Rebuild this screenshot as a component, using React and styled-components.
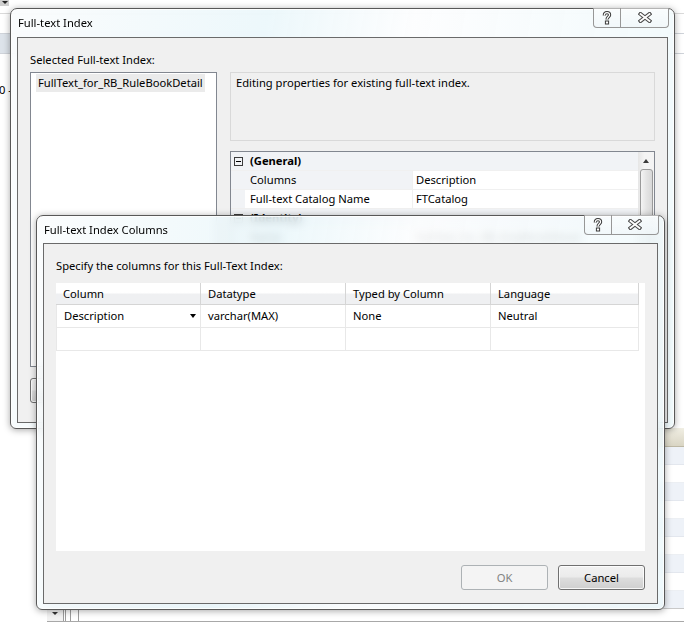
import React from 'react';
import styled, { createGlobalStyle } from 'styled-components';

const GlobalStyle = createGlobalStyle`
  html, body {
    margin: 0;
    padding: 0;
    background: #fff;
  }
  body {
    font-family: "Segoe UI", "Noto Sans", "Liberation Sans", sans-serif;
    font-size: 11.2px;
    color: #000;
  }
  * {
    box-sizing: border-box;
  }
`;

const Desktop = styled.div`
  position: relative;
  width: 684px;
  height: 622px;
  overflow: hidden;
  background: #fff;
  display: flex;
  flex-direction: column;
`;

/* the application behind the dialogs */
const TopStrip = styled.div`
  height: 14px;
  border-bottom: 1px solid #dadada;
  display: flex;
`;

const TinyDrop = styled.div`
  width: 9px;
  height: 6px;
  background: #cfcfcf;
  display: flex;
  justify-content: center;
  &::after {
    content: '';
    margin-top: 1px;
    border-left: 3px solid transparent;
    border-right: 3px solid transparent;
    border-top: 3px solid #222;
  }
`;

const Band = styled.div`
  margin-top: 19px;
  height: 21px;
  border-top: 1px solid #cfd3d9;
  border-bottom: 1px solid #cfd3d9;
  background: linear-gradient(to right, #dde3ea 0 12px, #fff 12px);
`;

const StrayText = styled.div`
  margin: 28px 0 0 -1px;
  line-height: 15px;
`;

const Filler = styled.div`
  flex: 1;
`;

const ResultsPane = styled.div`
  margin-left: 47px;
  height: 194px;
  display: flex;
  flex-direction: column;
`;

const PaneHeader = styled.div`
  height: 19px;
  background: linear-gradient(#f1efe4, #d9d5c4);
  border-bottom: 1px solid #bdb8a4;
`;

const PaneRows = styled.div`
  flex: 1;
  background: repeating-linear-gradient(#eef2f8 0 17px, #e3e7ee 17px 18px, #fff 18px 35px, #eceff3 35px 36px);
  border-bottom: 1px solid #c9c9c9;
`;

const PaneFooter = styled.div`
  height: 13px;
  display: flex;
  border-bottom: 1px solid #a8a8a8;
`;

const DropCell = styled.div`
  width: 16px;
  background: #f2f2f2;
  display: flex;
  justify-content: center;
  &::after {
    content: '';
    margin-top: 3px;
    border-left: 3px solid transparent;
    border-right: 3px solid transparent;
    border-top: 3px solid #333;
  }
`;

const PaneSep = styled.div`
  width: ${p => p.$w}px;
  border-left: 1px solid #9c9c9c;
`;

/* dialog window chrome */
const Window = styled.section`
  position: absolute;
  left: ${p => p.$left}px;
  top: ${p => p.$top}px;
  width: ${p => p.$w}px;
  height: ${p => p.$h}px;
  display: flex;
  flex-direction: column;
  border: 1px solid #585858;
  border-radius: 7px 7px 6px 6px;
  background: linear-gradient(100deg,
    rgba(250, 252, 253, 0.8) 0%,
    rgba(232, 246, 250, 0.8) 35%,
    rgba(252, 253, 254, 0.84) 55%,
    rgba(236, 248, 251, 0.8) 100%);
  backdrop-filter: blur(4px);
  box-shadow: 0 1px 7px rgba(0, 0, 0, 0.35), inset 0 0 0 1px rgba(255, 255, 255, 0.85);
`;

const TitleBar = styled.header`
  height: ${p => p.$h}px;
  flex: none;
  display: flex;
  justify-content: space-between;
  align-items: flex-start;
  padding-left: 7px;
`;

const Title = styled.span`
  margin-top: 6px;
  line-height: 15px;
`;

const CaptionGroup = styled.div`
  display: flex;
  height: 20px;
  margin-top: -1px;
  margin-right: 5px;
`;

const CaptionButton = styled.div`
  width: ${p => p.$w}px;
  display: flex;
  align-items: center;
  justify-content: center;
  border: 1px solid #979797;
  border-top: none;
  background: linear-gradient(rgba(255, 255, 255, 0.55), rgba(240, 246, 249, 0.7));
  &:first-child {
    border-bottom-left-radius: 4px;
  }
  &:last-child {
    border-left: none;
    border-bottom-right-radius: 4px;
  }
`;

const Client = styled.div`
  flex: 1;
  margin: 0 6px 5px;
  border: 1px solid #6a6a6a;
  background: #f0f0f0;
  padding: 14px 12px 0;
  display: flex;
  flex-direction: column;
`;

const Label = styled.div`
  line-height: 15px;
  margin-bottom: ${p => p.$gap}px;
`;

function HelpGlyph() {
  return (
    <svg width="10" height="14" viewBox="0 0 10 14">
      <path d="M2.3 4.6 C2.3 2.6 3.6 1.6 5 1.6 C6.6 1.6 7.6 2.6 7.6 4 C7.6 5.6 5 6 5 8.4" fill="none" stroke="#3a3a3a" strokeWidth="3.2" />
      <path d="M2.3 4.6 C2.3 2.6 3.6 1.6 5 1.6 C6.6 1.6 7.6 2.6 7.6 4 C7.6 5.6 5 6 5 8.4" fill="none" stroke="#fff" strokeWidth="1.2" />
      <rect x="3.4" y="10" width="3.2" height="3" fill="#fff" stroke="#3a3a3a" strokeWidth="1" />
    </svg>
  );
}

function CloseGlyph() {
  return (
    <svg width="14" height="11" viewBox="0 0 14 11">
      <path d="M2.5 2 L11.5 9 M11.5 2 L2.5 9" stroke="#4a4a4a" strokeWidth="4" strokeLinecap="square" />
      <path d="M2.5 2 L11.5 9 M11.5 2 L2.5 9" stroke="#fdfdfd" strokeWidth="1.8" strokeLinecap="square" />
    </svg>
  );
}

function CaptionButtons({ closeWidth }) {
  return (
    <CaptionGroup>
      <CaptionButton $w={28}><HelpGlyph /></CaptionButton>
      <CaptionButton $w={closeWidth}><CloseGlyph /></CaptionButton>
    </CaptionGroup>
  );
}

/* Full-text Index dialog parts */
const SplitRow = styled.div`
  display: flex;
  gap: 13px;
`;

const ListBox = styled.div`
  width: 187px;
  height: 295px;
  border: 1px solid #828790;
  background: #fff;
  padding: 1px 11px 0 5px;
`;

const ListItem = styled.div`
  background: #ebebeb;
  line-height: 18px;
  padding-left: 2px;
`;

const RightColumn = styled.div`
  flex: 1;
  display: flex;
  flex-direction: column;
`;

const DescBox = styled.div`
  height: 69px;
  border: 1px solid #d9d9d9;
  background: #f0f0f0;
  padding: 2px 5px;
  line-height: 15px;
`;

const PropGrid = styled.div`
  margin-top: 10px;
  height: 215px;
  border: 1px solid #828790;
  background: #fff;
  display: flex;
`;

const PropRows = styled.div`
  flex: 1;
  display: flex;
  flex-direction: column;
`;

const PropRow = styled.div`
  height: 19px;
  display: flex;
  border-bottom: 1px solid #f0f0f0;
  background: ${p => (p.$section ? '#f1f3f6' : '#fff')};
`;

const Gutter = styled.div`
  width: 14px;
  flex: none;
  background: #f1f3f6;
  display: flex;
  align-items: center;
  justify-content: center;
`;

const Expander = styled.span`
  width: 9px;
  height: 9px;
  border: 1px solid #3c3c3c;
  display: flex;
  align-items: center;
  justify-content: center;
  &::after {
    content: '';
    width: 5px;
    height: 1px;
    background: #000;
  }
`;

const SectionName = styled.div`
  padding-left: 5px;
  font-weight: 700;
  line-height: 18px;
`;

const NameCell = styled.div`
  width: 168px;
  flex: none;
  padding-left: 5px;
  line-height: 18px;
  background: ${p => (p.$shade ? '#f1f3f6' : '#fff')};
  border-right: 1px solid #f0f0f0;
`;

const ValueCell = styled.div`
  flex: 1;
  padding-left: 3px;
  line-height: 18px;
`;

const ScrollBar = styled.div`
  width: 16px;
  flex: none;
  background: linear-gradient(to right, #e6e6e6, #f4f4f4 40%, #f4f4f4);
  display: flex;
  flex-direction: column;
  align-items: center;
`;

const ScrollArrow = styled.div`
  height: 17px;
  display: flex;
  align-items: center;
  &::after {
    content: '';
    border-left: 3.5px solid transparent;
    border-right: 3.5px solid transparent;
    border-bottom: 4px solid #3a3a3a;
  }
`;

const ScrollThumb = styled.div`
  width: 13px;
  flex: 1;
  border: 1px solid #9a9a9a;
  border-radius: 3px 3px 0 0;
  background: linear-gradient(to right, #f4f4f4, #e4e4e4 50%, #d8d8d8);
`;

const ButtonRow = styled.div`
  display: flex;
  justify-content: ${p => p.$justify};
  gap: 10px;
  margin-top: ${p => p.$top}px;
`;

const Button = styled.div`
  width: 87px;
  height: 25px;
  display: flex;
  align-items: center;
  justify-content: center;
  border: 1px solid ${p => (p.$disabled ? '#adb2b5' : '#707070')};
  border-radius: 3px;
  color: ${p => (p.$disabled ? '#838383' : '#000')};
  background: ${p => (p.$disabled
    ? '#f4f4f4'
    : 'linear-gradient(#f2f2f2 0%, #ebebeb 48%, #dddddd 52%, #cfcfcf 100%)')};
  box-shadow: ${p => (p.$disabled ? 'none' : 'inset 0 0 0 1px rgba(255,255,255,0.8)')};
`;

/* Full-text Index Columns dialog parts */
const ColumnsGrid = styled.div`
  height: 268px;
  background: #fff;
`;

const GridHeader = styled.div`
  height: 22px;
  display: flex;
`;

const HeaderCell = styled.div`
  width: ${p => p.$w}px;
  padding-left: 7px;
  line-height: 21px;
  background: linear-gradient(#ffffff 0%, #ffffff 45%, #eff0f2 55%, #eff0f2 100%);
  border-right: 1px solid #d5d5d5;
  border-bottom: 1px solid #d5d5d5;
`;

const GridRow = styled.div`
  height: 23px;
  display: flex;
`;

const GridCell = styled.div`
  width: ${p => p.$w}px;
  padding: 0 7px;
  line-height: 22px;
  display: flex;
  justify-content: space-between;
  align-items: center;
  border-right: 1px solid #e8e8e8;
  border-bottom: 1px solid #e8e8e8;
  border-left: ${p => (p.$first ? '1px solid #e8e8e8' : 'none')};
`;

const ComboArrow = styled.span`
  border-left: 3.5px solid transparent;
  border-right: 3.5px solid transparent;
  border-top: 4px solid #000;
  margin-right: -3px;
`;

const columns = [
  { title: 'Column', w: 145, value: 'Description', combo: true },
  { title: 'Datatype', w: 145, value: 'varchar(MAX)' },
  { title: 'Typed by Column', w: 145, value: 'None' },
  { title: 'Language', w: 148, value: 'Neutral' },
];

export default function App() {
  return (
    <>
      <GlobalStyle />
      <Desktop>
        <TopStrip><TinyDrop /></TopStrip>
        <Band />
        <StrayText>0 -</StrayText>
        <Filler />
        <ResultsPane>
          <PaneHeader />
          <PaneRows />
          <PaneFooter>
            <DropCell />
            <PaneSep $w={2} />
            <PaneSep $w={5} />
            <PaneSep $w={8} />
            <PaneSep $w={9} />
          </PaneFooter>
        </ResultsPane>

        <Window $left={10} $top={8} $w={665} $h={421}>
          <TitleBar $h={28}>
            <Title>Full-text Index</Title>
            <CaptionButtons closeWidth={48} />
          </TitleBar>
          <Client>
            <Label $gap={5}>Selected Full-text Index:</Label>
            <SplitRow>
              <ListBox>
                <ListItem>FullText_for_RB_RuleBookDetail</ListItem>
              </ListBox>
              <RightColumn>
                <DescBox>Editing properties for existing full-text index.</DescBox>
                <PropGrid>
                  <PropRows>
                    <PropRow $section>
                      <Gutter><Expander /></Gutter>
                      <SectionName>(General)</SectionName>
                    </PropRow>
                    <PropRow>
                      <Gutter />
                      <NameCell $shade>Columns</NameCell>
                      <ValueCell>Description</ValueCell>
                    </PropRow>
                    <PropRow>
                      <Gutter />
                      <NameCell>Full-text Catalog Name</NameCell>
                      <ValueCell>FTCatalog</ValueCell>
                    </PropRow>
                    <PropRow $section>
                      <Gutter><Expander /></Gutter>
                      <SectionName>(Identity)</SectionName>
                    </PropRow>
                    <PropRow>
                      <Gutter />
                      <NameCell>Name</NameCell>
                      <ValueCell>FullText_for_RB_RuleBookDetail</ValueCell>
                    </PropRow>
                  </PropRows>
                  <ScrollBar>
                    <ScrollArrow />
                    <ScrollThumb />
                  </ScrollBar>
                </PropGrid>
              </RightColumn>
            </SplitRow>
            <ButtonRow $justify="flex-start" $top={11}>
              <Button>Script</Button>
            </ButtonRow>
          </Client>
        </Window>

        <Window $left={36} $top={215} $w={629} $h={395}>
          <TitleBar $h={27}>
            <Title>Full-text Index Columns</Title>
            <CaptionButtons closeWidth={47} />
          </TitleBar>
          <Client>
            <Label $gap={10}>Specify the columns for this Full-Text Index:</Label>
            <ColumnsGrid>
              <GridHeader>
                {columns.map(c => (
                  <HeaderCell key={c.title} $w={c.w}>{c.title}</HeaderCell>
                ))}
              </GridHeader>
              <GridRow>
                {columns.map((c, i) => (
                  <GridCell key={c.title} $w={c.w} $first={i === 0}>
                    {c.value}
                    {c.combo && <ComboArrow />}
                  </GridCell>
                ))}
              </GridRow>
              <GridRow>
                {columns.map((c, i) => (
                  <GridCell key={c.title} $w={c.w} $first={i === 0} />
                ))}
              </GridRow>
            </ColumnsGrid>
            <ButtonRow $justify="flex-end" $top={14}>
              <Button $disabled>OK</Button>
              <Button>Cancel</Button>
            </ButtonRow>
          </Client>
        </Window>
      </Desktop>
    </>
  );
}
